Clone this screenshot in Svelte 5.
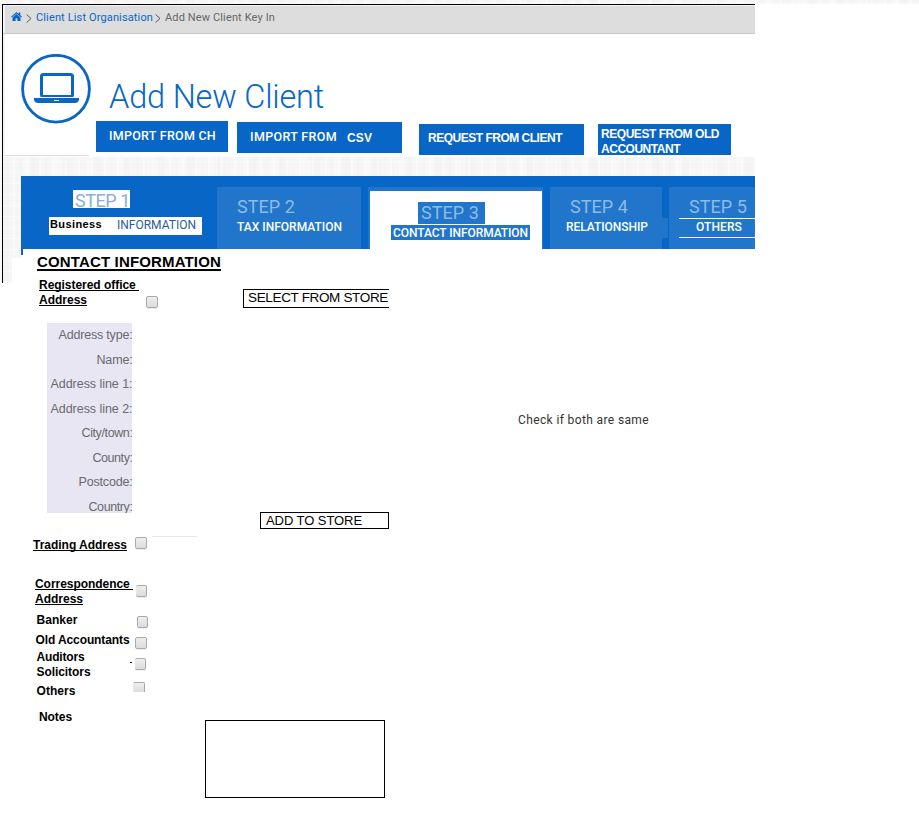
<script>
  // Tracks a label out (or in) so that it fills its designed width.
  function fit(node, width) {
    const natural = node.getBoundingClientRect().width;
    node.style.letterSpacing = `${(width - natural) / node.textContent.length}px`;
  }

  const fields = [
    ['Address type:', 74],
    ['Name:', 36],
    ['Address line 1:', 82],
    ['Address line 2:', 82],
    ['City/town:', 51],
    ['County:', 40],
    ['Postcode:', 54],
    ['Country:', 44],
  ];

  const addresses = [
    { id: 'trading', lines: [['Trading Address', 94]], underlined: true },
    { id: 'correspondence', lines: [['Correspondence\u00a0', 98], ['Address', 48]], underlined: true },
    { id: 'banker', lines: [['Banker', 41]] },
    { id: 'accountants', lines: [['Old Accountants', 94]] },
    { id: 'auditors', lines: [['Auditors', 48], ['Solicitors', 54]] },
    { id: 'others', lines: [['Others', 39]] },
  ];
</script>

{#snippet label(text, width)}<span class="label" use:fit={width}>{text}</span>{/snippet}

{#snippet chevron()}
  <svg class="chevron" width="6" height="9" viewBox="0 0 6 9"><path d="M.6.5 5 4.5.6 8.5" fill="none" stroke="#555" /></svg>
{/snippet}

<div class="page">
  <div class="strip texture"></div>
  <div class="frame-wrap texture">
    <div class="frame">
      <nav class="crumbs">
        <svg class="home" width="11" height="9" viewBox="0 0 11 9">
          <path fill="#0866c6" d="M5.5 0 7.7 1.9V.4h1.6v2.8L11 4.8l-.7.8L5.5 1.4.7 5.6 0 4.8zM5.5 2 9.5 5.4V9H6.4V6.2H4.6V9H1.5V5.4z" />
        </svg>
        {@render chevron()}
        <a href="#clients">{@render label('Client List Organisation', 117)}</a>
        {@render chevron()}
        <span class="here">{@render label('Add New Client Key In', 110)}</span>
      </nav>

      <header>
        <svg class="badge" width="70" height="70" viewBox="0 0 70 70">
          <circle cx="35" cy="34.7" r="33.4" fill="none" stroke="#0866c6" stroke-width="2.8" />
          <rect x="20.5" y="20.5" width="31" height="22" rx="2" fill="none" stroke="#0866c6" stroke-width="3" />
          <path fill="#fff" d="M13 43h45v1H13z" />
          <path fill="#0866c6" d="M13 44h45v2q-1 3-4 3H17q-3 0-4-3z" />
          <path fill="#fff" d="M33 46h5v1h-5z" />
        </svg>
        <div class="heading">
          <h1>{@render label('Add New Client', 215)}</h1>
          <div class="actions">
            <button class="ch">{@render label('IMPORT FROM CH', 107)}</button>
            <button class="csv">{@render label('IMPORT FROM', 87)}<b>{@render label('CSV', 25)}</b></button>
            <button class="client"><b>{@render label('REQUEST FROM CLIENT', 134)}</b></button>
            <button class="old">
              <b>{@render label('REQUEST FROM OLD', 118)}</b>
              <b>{@render label('ACCOUNTANT', 79)}</b>
            </button>
          </div>
        </div>
      </header>

      <div class="tabs">
        <div class="tab one">
          <div class="step">{@render label('STEP 1', 55)}</div>
          <div class="name"><b>{@render label('Business', 52)}</b>{@render label('INFORMATION', 79)}</div>
        </div>
        <div class="tab two">
          <div class="step">{@render label('STEP 2', 58)}</div>
          <div class="name">{@render label('TAX INFORMATION', 105)}</div>
        </div>
        <div class="tab three">
          <div class="step">{@render label('STEP 3', 58)}</div>
          <div class="name">{@render label('CONTACT INFORMATION', 135)}</div>
        </div>
        <div class="tab four">
          <div class="step">{@render label('STEP 4', 58)}</div>
          <div class="name">{@render label('RELATIONSHIP', 82)}</div>
        </div>
        <div class="nub"></div>
        <div class="tab five">
          <div class="step">{@render label('STEP 5', 58)}</div>
          <div class="name">{@render label('OTHERS', 46)}</div>
        </div>
      </div>
    </div>
  </div>

  <main>
    <section class="left">
      <h2>{@render label('CONTACT INFORMATION', 184)}</h2>
      <div class="row registered underlined">
        <div class="lines">
          <div>{@render label('Registered office\u00a0', 100)}</div>
          <div>{@render label('Address', 48)}</div>
        </div>
        <i class="check"></i>
      </div>
      <div class="fields">
        {#each fields as [text, width]}
          <div>{@render label(text, width)}</div>
        {/each}
      </div>
      {#each addresses as row}
        <div class="row {row.id}" class:underlined={row.underlined}>
          <div class="lines">
            {#each row.lines as [text, width]}
              <div>{@render label(text, width)}</div>
            {/each}
          </div>
          {#if row.id === 'auditors'}<i class="dash"></i>{/if}
          <i class="check"></i>
          {#if row.id === 'trading'}<i class="rule"></i>{/if}
        </div>
      {/each}
      <div class="notes">{@render label('Notes', 33)}</div>
    </section>

    <section class="middle">
      <div class="select">{@render label('SELECT FROM STORE', 140)}</div>
      <div class="add">{@render label('ADD TO STORE', 96)}</div>
      <div class="area"></div>
    </section>

    <section class="right">{@render label('Check if both are same', 131)}</section>
  </main>
</div>

<style>
  .page {
    width: 919px;
    height: 822px;
    overflow: hidden;
    display: flex;
    flex-direction: column;
    background: #fff;
    font-family: 'Liberation Sans', Arial, sans-serif;
    font-size: 12px;
    color: #000;
  }
  .label { white-space: nowrap; }
  .texture {
    background-color: #f6f6f6;
    background-image:
      repeating-linear-gradient(90deg, #fff6 0 2px, transparent 2px 7px, #ececec44 7px 8px, transparent 8px 13px),
      repeating-linear-gradient(0deg, #fff6 0 1px, transparent 1px 5px, #eeeeee44 5px 6px, transparent 6px 11px),
      repeating-linear-gradient(90deg, #f1f1f166 0 9px, transparent 9px 23px, #fff4 23px 31px);
  }
  .strip { height: 4px; flex: none; }
  .frame-wrap { width: 755px; height: 279px; flex: none; box-sizing: border-box; padding-left: 2px; }
  .frame {
    box-sizing: border-box;
    height: 279px;
    border-top: 1px solid #000;
    border-left: 1px solid #000;
  }
  .crumbs {
    display: flex;
    align-items: flex-start;
    height: 28px;
    padding-left: 8px;
    background: #ddd;
    border-bottom: 1px solid #c8c8c8;
    font: 11px/14px Roboto, sans-serif;
    box-shadow: inset 2px 1px #f4f4f4;
  }
  .home { margin-top: 7px; }
  .chevron { margin: 9px 5px 0 4px; }
  .crumbs a { color: #0866c6; text-decoration: none; margin: 6px 0 0 -1px; }
  .crumbs a + .chevron { margin: 9px 4px 0 2px; }
  .here { color: #666; margin-top: 6px; }
  header {
    display: flex;
    box-sizing: border-box;
    height: 123px;
    margin-left: 2px;
    padding: 20px 0 0 16px;
    background: linear-gradient(#ddd, #ddd) 0 121px / 84px 1px no-repeat, #fff;
  }
  .badge { flex: none; }
  h1 {
    margin: 22px 0 0 18px;
    height: 45px;
    font: 300 32.5px/42px Roboto, sans-serif;
    color: #0866c6;
  }
  .actions { display: flex; align-items: flex-start; padding-left: 5px; }
  button {
    display: block;
    box-sizing: border-box;
    height: 31px;
    padding: 0;
    border: 0;
    background: #0866c6;
    color: #fff;
    font: 500 12.5px/15px Roboto, sans-serif;
    text-align: left;
    white-space: nowrap;
  }
  button b { font: bold 12px/15px 'Liberation Sans', Arial, sans-serif; }
  .ch { width: 132px; padding: 0 0 2px 13px; }
  .csv { width: 165px; margin: 1px 0 0 9px; padding: 0 0 2px 13px; }
  .csv b { margin-left: 10px; position: relative; top: 1px; }
  .client { width: 165px; margin: 3px 0 0 17px; padding: 0 0 4px 9px; }
  .old { width: 133px; margin: 3px 0 0 14px; padding: 3px 0 0 3px; }
  .old b { display: block; }

  .tabs {
    display: flex;
    align-items: flex-start;
    box-sizing: border-box;
    height: 73px;
    margin: 19px 0 0 18px;
    padding-top: 11px;
    background: #0866c6;
    color: #fff;
    font: 500 12px/15px Roboto, sans-serif;
  }
  .tab { box-sizing: border-box; height: 62px; background: #2176cc; flex: none; }
  .step { font: 18px/22px Roboto, sans-serif; color: #8fbbe6; height: 22px; }
  .two .step, .four .step, .five .step { margin-top: 9px; }
  .two .name, .four .name { margin-top: 2px; }
  .one { width: 196px; background: none; padding: 3px 0 0 28px; }
  .one .step { width: 57px; height: 18px; line-height: 21px; margin-left: 24px; padding-left: 2px; box-sizing: border-box; background: #fff; color: #8faed2; }
  .one .name { width: 153px; height: 18px; box-sizing: border-box; margin-top: 9px; padding-left: 1px; background: #fff; color: #2a5e9b; font-weight: 400; line-height: 16px; display: flex; }
  .one .name b { margin-right: 15px; color: #000; font: bold 11px/15px 'Liberation Sans', Arial, sans-serif; }
  .two { width: 144px; padding-left: 20px; }
  .three { width: 175px; margin-left: 7px; border: solid #2176cc; border-width: 4px 1px 0 2px; background: #fff; padding: 11px 0 0 21px; }
  .three .step { width: 67px; margin-left: 27px; padding-left: 3px; box-sizing: border-box; background: #2176cc; }
  .three .name { width: 139px; margin-top: 1px; padding-left: 2px; box-sizing: border-box; background: #2176cc; line-height: 16px; height: 15px; }
  .four { width: 112px; margin-left: 7px; padding-left: 20px; }
  .four .name { margin-left: -4px; }
  .nub { width: 6px; height: 20px; margin: 31px 1px 0 0; background: #2176cc; flex: none; }
  .five { width: 86px; padding-left: 10px; }
  .five .step { margin-left: 10px; }
  .five .name { height: 18px; line-height: 17px; padding-left: 17px; border: solid #fff; border-width: 1px 0; }

  main {
    display: flex;
    align-items: flex-start;
    flex: none;
    height: 573px;
    margin: -34px 0 0 12px;
    background: linear-gradient(#0866c6, #0866c6) 9px 0 / 2px 6px no-repeat, #fff;
    clip-path: polygon(9px 0, 100% 0, 100% 100%, 0 100%, 0 9px, 9px 9px);
  }
  .left { width: 193px; flex: none; }
  h2 {
    margin: 3px 0 0 25px;
    width: 184px;
    height: 17px;
    border-bottom: 2px solid #000;
    font: bold 15px/19px 'Liberation Sans', Arial, sans-serif;
  }
  .row { display: flex; align-items: flex-start; font-weight: bold; line-height: 15px; }
  .underlined .label { text-decoration: underline; text-decoration-skip-ink: none; text-underline-offset: 1px; text-decoration-thickness: 1px; }
  .lines { flex: none; }
  .check {
    box-sizing: border-box;
    width: 12px;
    height: 12px;
    flex: none;
    border: 1px solid #aaa;
    border-radius: 2px;
    background: linear-gradient(#eee, #dcdcdc);
    box-shadow: 0 1px #eee;
  }
  .registered { height: 30px; margin: 7px 0 0 27px; }
  .registered .lines { width: 107px; }
  .registered .check { margin-top: 18px; }
  .fields {
    box-sizing: border-box;
    width: 85px;
    height: 190px;
    margin: 15px 0 0 35px;
    background: #e8e6f2;
    color: #6a6a70;
    font-size: 12.5px;
    line-height: 24.4px;
    overflow: hidden;
  }
  .fields div { height: 24.5px; display: flex; justify-content: flex-end; }
  .fields .label { margin-right: -.5px; }
  .trading { height: 15px; margin: 25px 0 0 21px; }
  .trading .lines { width: 102px; }
  .trading .check { margin-top: -1px; }
  .trading .rule { width: 45px; height: 1px; margin: -2px 0 0 5px; background: #e4e4f2; }
  .correspondence { height: 30px; margin: 24px 0 0 23px; }
  .correspondence .lines { width: 101px; }
  .correspondence .check { margin-top: 8px; width: 11px; border-left: 0; }
  .banker { height: 15px; margin: 6px 0 0 24.5px; }
  .banker .lines { width: 100.5px; }
  .banker .check { margin-top: 3px; width: 11px; }
  .accountants { height: 15px; margin: 5px 0 0 23.5px; }
  .accountants .lines { width: 99.5px; }
  .accountants .check { margin-top: 4px; }
  .auditors { height: 30px; margin: 2px 0 0 24.5px; }
  .auditors .lines { width: 93.5px; }
  .auditors .check { margin: 8px 0 0 3px; width: 11px; border-left: 0; }
  .dash { width: 2px; height: 1px; margin-top: 12px; background: #000; }
  .others { height: 15px; margin: 4px 0 0 24.5px; }
  .others .lines { width: 96.5px; }
  .others .check { width: 12px; height: 10px; margin-top: -2px; border-bottom: 0; border-left-color: #e4e4f2; border-radius: 0 2px 0 0; box-shadow: none; }
  .notes { margin: 11px 0 0 27px; font-weight: bold; line-height: 15px; }

  .middle { width: 184px; flex: none; }
  .select, .add, .area { box-sizing: border-box; border: 1px solid #000; }
  .select { width: 146px; height: 19px; margin: 40px 0 0 38px; padding-left: 4px; border-right: 0; font-size: 13.5px; line-height: 15px; }
  .add { width: 129px; height: 17px; margin: 204px 0 0 55px; padding-left: 5px; font-size: 13px; line-height: 15px; }
  .area { width: 180px; height: 78px; margin-top: 191px; }
  .right { margin: 163px 0 0 129px; font: 12px/16px Roboto, sans-serif; color: #333; }
</style>
